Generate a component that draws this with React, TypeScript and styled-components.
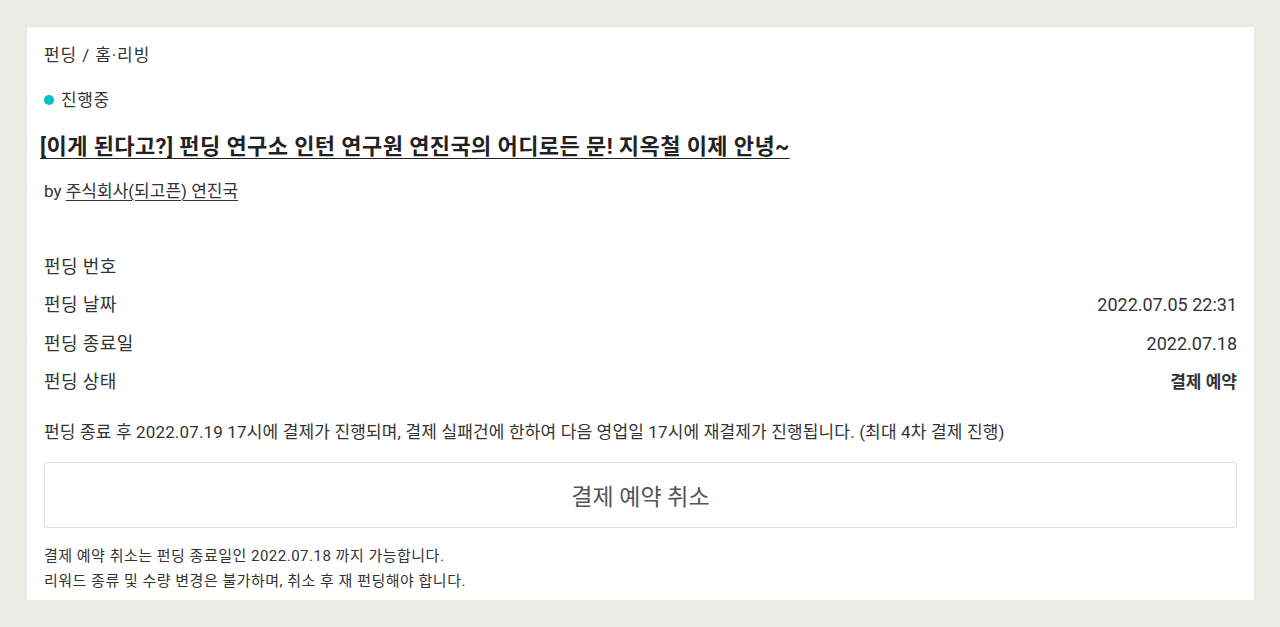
import styled, { createGlobalStyle } from "styled-components"

const GlobalStyle = createGlobalStyle`
    html, body {
        margin: 0;
        padding: 0;
        background: #ebebe6;
    }
    body {
        font-family: Roboto, "Noto Sans CJK KR", sans-serif;
        color: #333;
    }
`

const infoRows = [
    { label: "펀딩 번호", value: "" },
    { label: "펀딩 날짜", value: "2022.07.05 22:31" },
    { label: "펀딩 종료일", value: "2022.07.18" },
    { label: "펀딩 상태", value: "결제 예약", strong: true }
]

export default function App () {
    return <Page>
        <GlobalStyle/>
        <Card>
            <Category>펀딩 / 홈·리빙</Category>
            <Status><Dot/>진행중</Status>
            <Title href="#">[이게 된다고?] 펀딩 연구소 인턴 연구원 연진국의 어디로든 문! 지옥철 이제 안녕~</Title>
            <Maker>by <MakerLink href="#">주식회사(되고픈) 연진국</MakerLink></Maker>
            <InfoList>
                {infoRows.map(row =>
                    <InfoRow key={row.label}>
                        <dt>{row.label}</dt>
                        <InfoValue $strong={row.strong}>{row.value}</InfoValue>
                    </InfoRow>)}
            </InfoList>
            <Notice>펀딩 종료 후 2022.07.19 17시에 결제가 진행되며, 결제 실패건에 한하여 다음 영업일 17시에 재결제가 진행됩니다. (최대 4차 결제 진행)</Notice>
            <CancelButton>결제 예약 취소</CancelButton>
            <Guide>
                결제 예약 취소는 펀딩 종료일인 2022.07.18 까지 가능합니다.<br/>
                리워드 종류 및 수량 변경은 불가하며, 취소 후 재 펀딩해야 합니다.
            </Guide>
        </Card>
    </Page>
}

const Page = styled.div`
    padding: 27px 26px 27px 27px;
    min-height: 627px;
    box-sizing: border-box;
`

const Card = styled.div`
    background: #fff;
    padding: 14px 17px 6px;
`

const Category = styled.div`
    font-size: 17px;
    line-height: 28px;
    letter-spacing: 0.9px;
`

const Status = styled.div`
    display: flex;
    align-items: center;
    margin-top: 17px;
    font-size: 17px;
    line-height: 28px;
    letter-spacing: 0.6px;
`

const Dot = styled.span`
    width: 10px;
    height: 10px;
    border-radius: 50%;
    background: #00c4c4;
    margin-right: 7px;
`

const Title = styled.a`
    display: inline-block;
    margin: 19px 0 0 -4px;
    font-size: 22px;
    font-weight: 700;
    line-height: 28px;
    letter-spacing: 0.4px;
    color: #222;
    text-decoration: underline;
    text-underline-offset: 4px;
    text-decoration-thickness: 1px;
`

const Maker = styled.div`
    margin-top: 18px;
    font-size: 17px;
    line-height: 24px;
`

const MakerLink = styled.a`
    color: #333;
    text-decoration: underline;
    text-underline-offset: 3px;
    text-decoration-thickness: 1px;
`

const InfoList = styled.dl`
    margin: 45px 0 0;
`

const InfoRow = styled.div`
    display: flex;
    justify-content: space-between;
    font-size: 18px;
    line-height: 38.3px;
    dt {
        margin: 0;
        letter-spacing: 0.4px;
    }
`

const InfoValue = styled.dd<{ $strong?: boolean }>`
    margin: 0;
    font-weight: ${p => p.$strong ? 700 : 400};
    font-size: ${p => p.$strong ? "17px" : "18px"};
`

const Notice = styled.p`
    margin: 19px 0 0;
    font-size: 17px;
    line-height: 24px;
    letter-spacing: 0.15px;
`

const CancelButton = styled.button`
    display: block;
    width: 100%;
    height: 66px;
    margin-top: 18px;
    border: 1px solid #ddd;
    border-radius: 3px;
    background: #fff;
    color: #555;
    font-family: Roboto, "Noto Sans CJK KR", sans-serif;
    font-size: 23px;
    cursor: pointer;
`

const Guide = styled.p`
    margin: 16px 0 0;
    font-size: 15px;
    line-height: 25px;
    letter-spacing: 0.5px;
`
